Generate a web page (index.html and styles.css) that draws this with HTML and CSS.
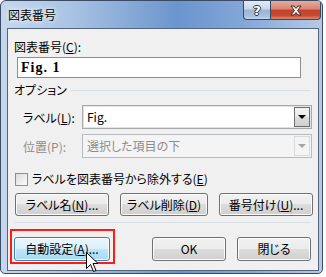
FILE: index.html
```html
<!DOCTYPE html>
<html lang="ja">
<head>
    <meta charset="UTF-8">
    <title>図表番号</title>
    <link rel="stylesheet" href="styles.css">
</head>
<body>
    <div class="window">
        <div class="titlebar">
            <span class="title">図表番号</span>
            <div class="caption-btns">
                <div class="cap-btn help">?</div>
                <div class="cap-btn close">
                    <svg width="14" height="11" viewBox="0 0 14 11">
                        <path d="M2 1 L5 1 L7 3.5 L9 1 L12 1 L8.5 5.5 L12 10 L9 10 L7 7.5 L5 10 L2 10 L5.5 5.5 Z" fill="#fff" stroke="#3b2a2a" stroke-width="1" stroke-linejoin="round"/>
                    </svg>
                </div>
            </div>
        </div>

        <div class="client">
            <div class="field-label">図表番号(<u>C</u>):</div>
            <div class="caption-input">Fig. 1</div>

            <div class="group-head">
                <span>オプション</span>
                <div class="rule"></div>
            </div>

            <div class="opt-row">
                <span class="opt-label">ラベル(<u>L</u>):</span>
                <div class="select">
                    <span class="select-text">Fig.</span>
                    <div class="drop"><span class="arrow"></span></div>
                </div>
            </div>
            <div class="opt-row disabled">
                <span class="opt-label">位置(P):</span>
                <div class="select">
                    <span class="select-text">選択した項目の下</span>
                    <div class="drop"><span class="arrow"></span></div>
                </div>
            </div>

            <div class="check-row">
                <span class="checkbox"></span>
                <span>ラベルを図表番号から除外する(<u>E</u>)</span>
            </div>

            <div class="btn-row">
                <button class="btn w-wide">ラベル名(<u>N</u>)...</button>
                <button class="btn w-mid">ラベル削除(<u>D</u>)</button>
                <button class="btn w-wide">番号付け(<u>U</u>)...</button>
            </div>

            <div class="sep"></div>

            <div class="footer">
                <button class="btn hot w-auto">自動設定(<u>A</u>)...</button>
                <div class="footer-right">
                    <button class="btn w-ok">OK</button>
                    <button class="btn w-ok">閉じる</button>
                </div>
            </div>
        </div>
    </div>

    <div class="highlight"></div>
    <svg class="cursor" width="13" height="21" viewBox="0 0 13 21">
        <path d="M0.5 0.5 L0.5 16.5 L4.5 12.5 L7.5 19.5 L10 18.5 L7 11.5 L12 11.5 Z" fill="#fff" stroke="#000" stroke-width="1" stroke-linejoin="miter"/>
    </svg>
</body>
</html>
```

FILE: styles.css
```css
body {
    margin: 0;
    background-color: #ffffff;
    font-family: "Noto Sans CJK JP", "Noto Sans", sans-serif;
    font-size: 12px;
    font-feature-settings: "palt";
    color: #000;
}

u {
    text-decoration: underline;
    text-underline-offset: 1px;
}

.window {
    box-sizing: border-box;
    width: 323px;
    height: 274px;
    border: 1px solid #3a4b63;
    border-radius: 6px 6px 5px 5px;
    background: linear-gradient(90deg, #c5d7ec 0%, #a9c3e3 22%, #6a95ce 55%, #82a6d8 75%, #b3cae7 100%);
    display: flex;
    flex-direction: column;
    overflow: hidden;
}

.titlebar {
    height: 27px;
    display: flex;
    justify-content: space-between;
    align-items: flex-start;
    flex-shrink: 0;
}

.title {
    margin: 5px 0 0 7px;
    line-height: 18px;
    font-size: 12px;
    text-shadow: 0 0 6px #f4f8fc, 0 0 3px #f4f8fc;
}

.caption-btns {
    display: flex;
    margin-right: 1px;
}

.cap-btn {
    height: 18px;
    border: 1px solid #364a66;
    border-top: none;
    display: flex;
    align-items: center;
    justify-content: center;
}

.help {
    width: 26px;
    border-radius: 0 0 0 4px;
    border-right: none;
    background: linear-gradient(#e4ebf4 0%, #c9d7e9 45%, #9ab4d4 50%, #a8c1df 85%, #c6d8ee 100%);
    color: #fff;
    font-family: "DejaVu Sans", sans-serif;
    font-weight: bold;
    font-size: 13px;
    text-shadow: 1px 0 #2a3344, -1px 0 #2a3344, 0 1px #2a3344, 0 -1px #2a3344;
}

.close {
    width: 49px;
    border-radius: 0 0 4px 0;
    background: linear-gradient(#e8ab9b 0%, #d98672 45%, #c3402c 50%, #c54a34 80%, #dc8a6c 100%);
}

.client {
    margin: 0 3px 2px 6px;
    flex: 1;
    border: 1px solid #54657d;
    background-color: #f0f0f0;
    display: flex;
    flex-direction: column;
}

.field-label {
    margin: 10px 0 0 6px;
    line-height: 16px;
}

.caption-input {
    box-sizing: border-box;
    margin: 2px 0 0 9px;
    width: 284px;
    height: 21px;
    border: 1px solid #8a8d91;
    background-color: #fff;
    font-family: "Liberation Serif", serif;
    font-weight: bold;
    font-size: 14px;
    letter-spacing: 1px;
    line-height: 19px;
    padding-left: 3px;
}

.group-head {
    margin: 4px 0 0 6px;
    display: flex;
    align-items: center;
    width: 297px;
    line-height: 16px;
}

.rule {
    flex: 1;
    height: 1px;
    margin-left: 4px;
    background-color: #d5dfe5;
}

.opt-row {
    margin: 7px 0 0 15px;
    display: flex;
    align-items: center;
    height: 24px;
}

.opt-row + .opt-row {
    margin-top: 5px;
}

.opt-label {
    width: 59px;
}

.select {
    box-sizing: border-box;
    width: 230px;
    height: 24px;
    border: 1px solid #a7a9ab;
    box-shadow: inset 0 0 0 1px #e2e3e4;
    background-color: #fff;
    display: flex;
    align-items: center;
    justify-content: space-between;
}

.select-text {
    padding-left: 4px;
    line-height: 16px;
}

.drop {
    box-sizing: border-box;
    width: 16px;
    height: 20px;
    margin-right: 1px;
    border: 1px solid #6f6f6f;
    background: linear-gradient(#f2f2f2 0%, #ebebeb 50%, #dcdcdc 51%, #cfcfcf 100%);
    display: flex;
    align-items: center;
    justify-content: center;
}

.arrow {
    width: 0;
    height: 0;
    border-left: 4px solid transparent;
    border-right: 4px solid transparent;
    border-top: 4px solid #000;
}

.disabled {
    color: #8d8d8d;
}

.disabled .select {
    background-color: #f4f4f4;
    border-color: #b9bcbf;
    box-shadow: none;
}

.disabled .drop {
    border-color: #dadada;
    background: #f4f4f4;
}

.disabled .arrow {
    border-top-color: #a5a5a5;
}

.check-row {
    margin: 13px 0 0 7px;
    display: flex;
    align-items: center;
    gap: 2px;
    line-height: 16px;
}

.checkbox {
    box-sizing: border-box;
    width: 13px;
    height: 13px;
    border: 1px solid #8f8f8f;
    background: linear-gradient(135deg, #dcdcdc, #fbfbfb);
    margin-right: 2px;
}

.btn-row {
    margin: 6px 0 0 7px;
    display: flex;
    gap: 11px;
}

.btn {
    box-sizing: border-box;
    height: 23px;
    padding: 0;
    border: 1px solid #707070;
    border-radius: 3px;
    background: linear-gradient(#f2f2f2 0%, #ebebeb 49%, #dddddd 50%, #cfcfcf 100%);
    box-shadow: inset 0 0 0 1px #fcfcfc;
    font-family: inherit;
    font-size: 12px;
    font-feature-settings: "palt";
    color: #000;
    line-height: 16px;
}

.w-wide { width: 94px; }
.w-mid { width: 88px; }
.w-auto { width: 96px; }
.w-ok { width: 74px; }

.sep {
    margin: 6px 0 0 7px;
    width: 296px;
    height: 1px;
    background-color: #d5dfe5;
}

.footer {
    margin: 14px 0 0 6px;
    width: 297px;
    display: flex;
    justify-content: space-between;
}

.footer .btn {
    height: 24px;
}

.footer-right {
    display: flex;
    gap: 11px;
}

.btn.hot {
    border-color: #3c7fb1;
    background: linear-gradient(#eaf6fd 0%, #d9f0fc 49%, #bee6fd 50%, #a7d9f5 100%);
}

.highlight {
    position: absolute;
    left: 10px;
    top: 229px;
    width: 101px;
    height: 31px;
    border: 2px solid #ff1a1a;
}

.cursor {
    position: absolute;
    left: 86px;
    top: 252px;
}
```
